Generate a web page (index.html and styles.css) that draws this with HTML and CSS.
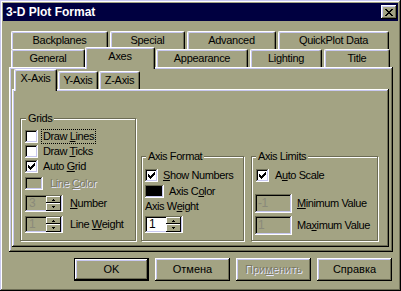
FILE: index.html
```html
<!DOCTYPE html>
<html>
	<head>
		<meta charset='utf-8'>
		<title>3-D Plot Format</title>
		<link rel="stylesheet" href="styles.css">
	</head>
	<body>
		<div class="win">
			<div class="caption">
				<span>3-D Plot Format</span>
				<div class="close">
					<svg width="8" height="7" viewBox="0 0 8 7"><path d="M0 0h2v1H0z M6 0h2v1H6z M1 1h2v1H1z M5 1h2v1H5z M2 2h4v1H2z M3 3h2v1H3z M2 4h4v1H2z M1 5h2v1H1z M5 5h2v1H5z M0 6h2v1H0z M6 6h2v1H6z"/></svg>
				</div>
			</div>
			<div class="body">
				<div class="tabrow">
					<div class="tab w-back">Backplanes</div>
					<div class="tab w-special">Special</div>
					<div class="tab w-adv">Advanced</div>
					<div class="tab w-quick">QuickPlot Data</div>
				</div>
				<div class="tabrow">
					<div class="tab w-general">General</div>
					<div class="tab sel w-axes">Axes</div>
					<div class="tab w-appear">Appearance</div>
					<div class="tab w-light">Lighting</div>
					<div class="tab w-title">Title</div>
				</div>
				<div class="panel">
					<div class="tabrow sub">
						<div class="tab sel w-x">X-Axis</div>
						<div class="tab w-y">Y-Axis</div>
						<div class="tab w-z">Z-Axis</div>
					</div>
					<div class="page">
						<!-- Grids -->
						<div class="grp grids">
							<div class="grp-title">Grids</div>
							<div class="row chk-row first">
								<span class="chk"></span>
								<span class="lbl focus">Draw <u>L</u>ines</span>
							</div>
							<div class="row chk-row">
								<span class="chk"></span>
								<span class="lbl">Draw <u>T</u>icks</span>
							</div>
							<div class="row chk-row">
								<span class="chk on"><svg width="7" height="7" viewBox="0 0 7 7"><path d="M0 2h1v3H0z M1 3h1v3H1z M2 4h1v3H2z M3 3h1v3H3z M4 2h1v3H4z M5 1h1v3H5z M6 0h1v3H6z"/></svg></span>
								<span class="lbl">Auto <u>G</u>rid</span>
							</div>
							<div class="row color-row">
								<span class="swatch"></span>
								<span class="lbl off gap7">Line <u>C</u>olor</span>
							</div>
							<div class="row spin-row first-spin">
								<div class="spin dis">
									<span class="spin-val">3</span>
									<span class="spin-btns">
										<span class="sb"><svg width="3" height="2" viewBox="0 0 3 2"><path d="M1 0h1v1H1z M0 1h3v1H0z"/></svg></span>
										<span class="sb"><svg width="3" height="2" viewBox="0 0 3 2"><path d="M0 0h3v1H0z M1 1h1v1H1z"/></svg></span>
									</span>
								</div>
								<span class="lbl gap7"><u>N</u>umber</span>
							</div>
							<div class="row spin-row">
								<div class="spin dis">
									<span class="spin-val">1</span>
									<span class="spin-btns">
										<span class="sb"><svg width="3" height="2" viewBox="0 0 3 2"><path d="M1 0h1v1H1z M0 1h3v1H0z"/></svg></span>
										<span class="sb"><svg width="3" height="2" viewBox="0 0 3 2"><path d="M0 0h3v1H0z M1 1h1v1H1z"/></svg></span>
									</span>
								</div>
								<span class="lbl gap7">Line <u>W</u>eight</span>
							</div>
						</div>
						<!-- Axis Format -->
						<div class="grp fmt">
							<div class="grp-title">Axis Format</div>
							<div class="row chk-row first">
								<span class="chk on"><svg width="7" height="7" viewBox="0 0 7 7"><path d="M0 2h1v3H0z M1 3h1v3H1z M2 4h1v3H2z M3 3h1v3H3z M4 2h1v3H4z M5 1h1v3H5z M6 0h1v3H6z"/></svg></span>
								<span class="lbl"><u>S</u>how Numbers</span>
							</div>
							<div class="row color-row tight">
								<span class="swatch black"></span>
								<span class="lbl">Axis C<u>o</u>lor</span>
							</div>
							<div class="plain-lbl">Axis W<u>e</u>ight</div>
							<div class="row spin-row fmt-spin">
								<div class="spin">
									<span class="spin-val">1</span>
									<span class="spin-btns">
										<span class="sb"><svg width="3" height="2" viewBox="0 0 3 2"><path d="M1 0h1v1H1z M0 1h3v1H0z"/></svg></span>
										<span class="sb"><svg width="3" height="2" viewBox="0 0 3 2"><path d="M0 0h3v1H0z M1 1h1v1H1z"/></svg></span>
									</span>
								</div>
							</div>
						</div>
						<!-- Axis Limits -->
						<div class="grp lim">
							<div class="grp-title">Axis Limits</div>
							<div class="row chk-row first">
								<span class="chk on"><svg width="7" height="7" viewBox="0 0 7 7"><path d="M0 2h1v3H0z M1 3h1v3H1z M2 4h1v3H2z M3 3h1v3H3z M4 2h1v3H4z M5 1h1v3H5z M6 0h1v3H6z"/></svg></span>
								<span class="lbl gap6">A<u>u</u>to Scale</span>
							</div>
							<div class="row edit-row first-edit">
								<span class="edit">-1</span>
								<span class="lbl"><u>M</u>inimum Value</span>
							</div>
							<div class="row edit-row">
								<span class="edit">1</span>
								<span class="lbl">Ma<u>x</u>imum Value</span>
							</div>
						</div>
					</div>
				</div>
				<div class="buttons">
					<div class="btn default">OK</div>
					<div class="btn">Отмена</div>
					<div class="btn off">При<u>м</u>енить</div>
					<div class="btn">Справка</div>
				</div>
			</div>
		</div>
	</body>
</html>
```

FILE: styles.css
```css
body{
	margin:0;
	background:#a3a383;
	font-family:"Liberation Sans",Arial,sans-serif;
	font-size:11px;
	color:#000;
}
.win{
	width:401px;
	height:291px;
	box-sizing:border-box;
	padding:3px;
	background:#a3a383;
	box-shadow:inset -1px -1px #000,inset 1px 1px #c8c8f0,inset -2px -2px #6c6c54,inset 2px 2px #fff;
}
.caption{
	height:18px;
	background:#000040;
	color:#fff;
	font-weight:bold;
	font-size:12px;
	display:flex;
	align-items:center;
	justify-content:space-between;
	padding:0 1px 0 3px;
}
.close{
	width:16px;
	height:14px;
	box-sizing:border-box;
	background:#a3a383;
	display:flex;
	align-items:center;
	justify-content:center;
	box-shadow:inset -1px -1px #000,inset 1px 1px #fff,inset -2px -2px #6c6c54,inset 2px 2px #c8c8f0;
}
.close svg{
	display:block;
	shape-rendering:crispEdges;
	margin-top:1px;
}
.body{
	padding:10px 5px 0 6px;
}

/* tabs */
.tabrow{
	display:flex;
	height:18px;
	padding-left:2px;
}
.tab{
	box-sizing:border-box;
	height:18px;
	margin-right:2px;
	border-top:1px solid #fff;
	border-left:1px solid #fff;
	border-right:1px solid #000;
	border-top-left-radius:2px;
	border-top-right-radius:2px;
	box-shadow:inset -1px 0 #6c6c54,inset 1px 1px #c8c8f0;
	background:#a3a383;
	text-align:center;
	line-height:16px;
	letter-spacing:-0.3px;
	white-space:nowrap;
}
.tab.sel{
	position:relative;
	z-index:1;
	height:22px;
	margin-top:-2px;
	margin-left:-2px;
	margin-right:1px;
}
.w-back{width:97px;}
.w-special{width:75px;}
.w-adv{width:89px;}
.w-quick{width:111px;}
.w-general{width:74px;}
.w-axes{width:70px;}
.w-appear{width:92px;}
.w-light{width:72px;}
.w-title{width:66px;}
.tabrow.sub{
	margin-top:2px;
	padding-left:5px;
}
.tabrow.sub .tab{
	margin-right:1px;
}
.w-x{width:43px;}
.w-y{width:40px;}
.w-z{width:41px;}

.panel{
	width:384px;
	height:185px;
	box-sizing:border-box;
	padding:2px;
	box-shadow:inset -1px -1px #000,inset 1px 1px #fff,inset -2px -2px #6c6c54,inset 2px 2px #c8c8f0;
}
.page{
	width:377px;
	height:158px;
	margin-left:1px;
	box-sizing:border-box;
	padding:0 0 6px 8px;
	display:flex;
	align-items:flex-end;
	box-shadow:inset -1px -1px #000,inset 1px 1px #fff,inset -2px -2px #6c6c54,inset 2px 2px #c8c8f0;
}

/* group boxes */
.grp{
	box-sizing:border-box;
	border:1px solid #6c6c54;
	box-shadow:1px 1px 0 #fff,inset 1px 1px 0 #fff;
	letter-spacing:-0.4px;
}
.grids{
	width:116px;
	height:123px;
}
.fmt{
	width:103px;
	height:85px;
	margin-left:5px;
}
.lim{
	width:127px;
	height:85px;
	margin-left:7px;
}
.grp-title{
	width:fit-content;
	height:13px;
	line-height:13px;
	margin:-7px 0 0 5px;
	padding:0 2px;
	background:#a3a383;
}
.fmt .grp-title,
.lim .grp-title{
	margin-left:4px;
}
.row{
	display:flex;
	align-items:center;
	padding-left:4px;
	white-space:nowrap;
}
.fmt .row,
.lim .row{
	padding-left:3px;
}
.chk-row{
	height:15px;
}
.chk-row.first{
	margin-top:4px;
}
.fmt .chk-row.first,
.lim .chk-row.first{
	margin-top:5px;
}
.lim .chk{
	margin-left:1px;
}
.chk{
	width:13px;
	height:13px;
	flex:none;
	box-sizing:border-box;
	background:#fff;
	display:flex;
	align-items:center;
	justify-content:center;
	box-shadow:inset -1px -1px #fff,inset 1px 1px #6c6c54,inset -2px -2px #c8c8f0,inset 2px 2px #000;
}
.chk svg{
	display:block;
	shape-rendering:crispEdges;
}
.lbl{
	margin-left:5px;
	line-height:13px;
}
.lbl.gap6{
	margin-left:6px;
}
.lbl.gap7{
	margin-left:7px;
}
.focus{
	padding:0 1px;
	margin-left:4px;
	outline:1px dotted #000;
}
.off{
	color:#7a7a64;
	text-shadow:1px 1px 0 #e8e8ff;
}
.color-row{
	height:13px;
	margin-top:3px;
}
.color-row.tight{
	margin-top:2px;
}
.swatch{
	width:18px;
	height:13px;
	flex:none;
	box-sizing:border-box;
	background:#a3a383;
	box-shadow:inset -1px -1px #fff,inset 1px 1px #6c6c54,inset -2px -2px #c8c8f0,inset 2px 2px #000;
}
.fmt .swatch{
	width:19px;
}
.swatch.black{
	background:#000;
}
.plain-lbl{
	margin-top:2px;
	padding-left:3px;
	line-height:13px;
}
.spin-row{
	height:17px;
	margin-top:4px;
}
.spin-row.first-spin{
	margin-top:5px;
}
.spin-row.fmt-spin{
	margin-top:3px;
}
.spin{
	width:38px;
	height:17px;
	flex:none;
	box-sizing:border-box;
	padding:1px 2px 1px 2px;
	display:flex;
	background:#fff;
	box-shadow:inset -1px -1px #fff,inset 1px 1px #6c6c54,inset -2px -2px #c8c8f0,inset 2px 2px #000;
}
.spin.dis{
	background:#a3a383;
	color:#8a8a7a;
}
.spin-val{
	flex:1;
	padding-left:2px;
	line-height:15px;
	font-size:12px;
}
.spin-btns{
	width:15px;
	display:flex;
	flex-direction:column;
}
.sb{
	height:7px;
	display:flex;
	align-items:center;
	justify-content:center;
	background:#a3a383;
	box-shadow:inset -1px -1px #000,inset 1px 1px #fff;
}
.sb + .sb{
	height:8px;
}
.sb svg{
	display:block;
	shape-rendering:crispEdges;
}
.edit-row{
	height:19px;
	margin-top:3px;
}
.edit-row.first-edit{
	margin-top:11px;
}
.edit{
	width:37px;
	height:19px;
	flex:none;
	box-sizing:border-box;
	padding-left:3px;
	line-height:19px;
	font-size:12px;
	color:#8a8a7a;
	box-shadow:inset -1px -1px #fff,inset 1px 1px #6c6c54,inset -2px -2px #c8c8f0,inset 2px 2px #000;
}

/* buttons */
.buttons{
	display:flex;
	justify-content:flex-end;
	gap:6px;
	margin-top:6px;
	padding-right:1px;
}
.btn{
	width:75px;
	height:23px;
	box-sizing:border-box;
	line-height:23px;
	text-align:center;
	font-size:11px;
	box-shadow:inset -1px -1px #000,inset 1px 1px #fff,inset -2px -2px #6c6c54,inset 2px 2px #c8c8f0;
}
.btn.default{
	box-shadow:inset 0 0 0 1px #000,inset -2px -2px #000,inset 2px 2px #fff,inset -3px -3px #6c6c54,inset 3px 3px #c8c8f0;
}
```
